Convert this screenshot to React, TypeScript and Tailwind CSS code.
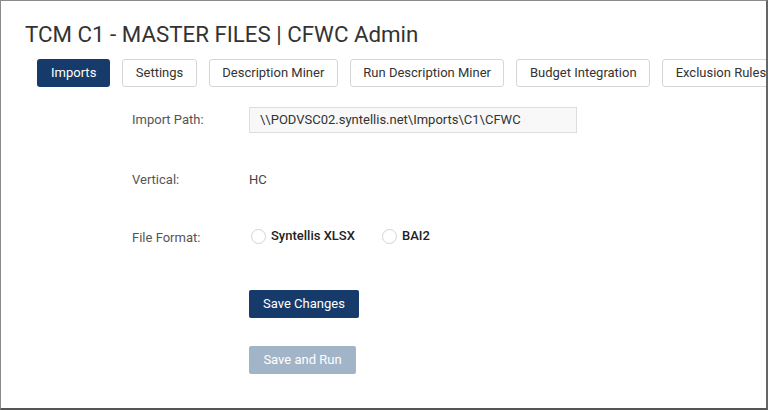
const tabs = [
  'Imports',
  'Settings',
  'Description Miner',
  'Run Description Miner',
  'Budget Integration',
  'Exclusion Rules',
]

function Radio({ label }: { label: string }) {
  return (
    <label className="flex items-center gap-[5px]">
      <span className="w-[15px] h-[15px] rounded-full border border-[#d4d4d4] bg-white" />
      <span className="text-[13px] font-medium text-[#222]">{label}</span>
    </label>
  )
}

export default function App() {
  return (
    <div
      className="w-[768px] h-[410px] overflow-hidden bg-white border-l border-t border-[#8a8a8a] border-r-2 border-b-2 border-r-[#666] border-b-[#555]"
      style={{ fontFamily: 'Roboto, "Liberation Sans", sans-serif' }}
    >
      <h1 className="pl-[24px] pt-[18px] text-[22.3px] leading-[30px] text-[#333]">
        TCM C1 - MASTER FILES | CFWC Admin
      </h1>

      <div className="flex gap-[12px] pl-[36px] mt-[10px] whitespace-nowrap">
        {tabs.map((t, i) => (
          <button
            key={t}
            className={
              i === 0
                ? 'h-[28px] px-[14px] rounded-[3px] bg-[#163a6a] text-white text-[13px] shrink-0'
                : 'h-[28px] px-[12.5px] rounded-[3px] bg-white border border-[#d6d6d6] text-[#333] text-[13px] shrink-0'
            }
          >
            {t}
          </button>
        ))}
      </div>

      <div className="pl-[131px] mt-[20px] text-[13px]">
        <div className="flex items-center h-[26px]">
          <span className="w-[117px] text-[#555]">Import Path:</span>
          <div className="w-[328px] h-[26px] border border-[#ddd] bg-[#f8f8f8] flex items-center pl-[10px] text-[#333]">
            \\PODVSC02.syntellis.net\Imports\C1\CFWC
          </div>
        </div>

        <div className="flex items-center h-[26px] mt-[34px]">
          <span className="w-[117px] text-[#555]">Vertical:</span>
          <span className="text-[#444]">HC</span>
        </div>

        <div className="flex items-center h-[26px] mt-[32px]">
          <span className="w-[119px] text-[#555]">File Format:</span>
          <div className="flex items-center gap-[27px] -mt-[4px]">
            <Radio label="Syntellis XLSX" />
            <Radio label="BAI2" />
          </div>
        </div>

        <div className="pl-[117px] mt-[39px] flex flex-col items-start gap-[28px]">
          <button className="h-[28px] w-[110px] rounded-[2px] bg-[#163a6a] text-white text-[13px]">
            Save Changes
          </button>
          <button className="h-[28px] w-[107px] rounded-[2px] bg-[#a2b4c8] text-white text-[13px]">
            Save and Run
          </button>
        </div>
      </div>
    </div>
  )
}
